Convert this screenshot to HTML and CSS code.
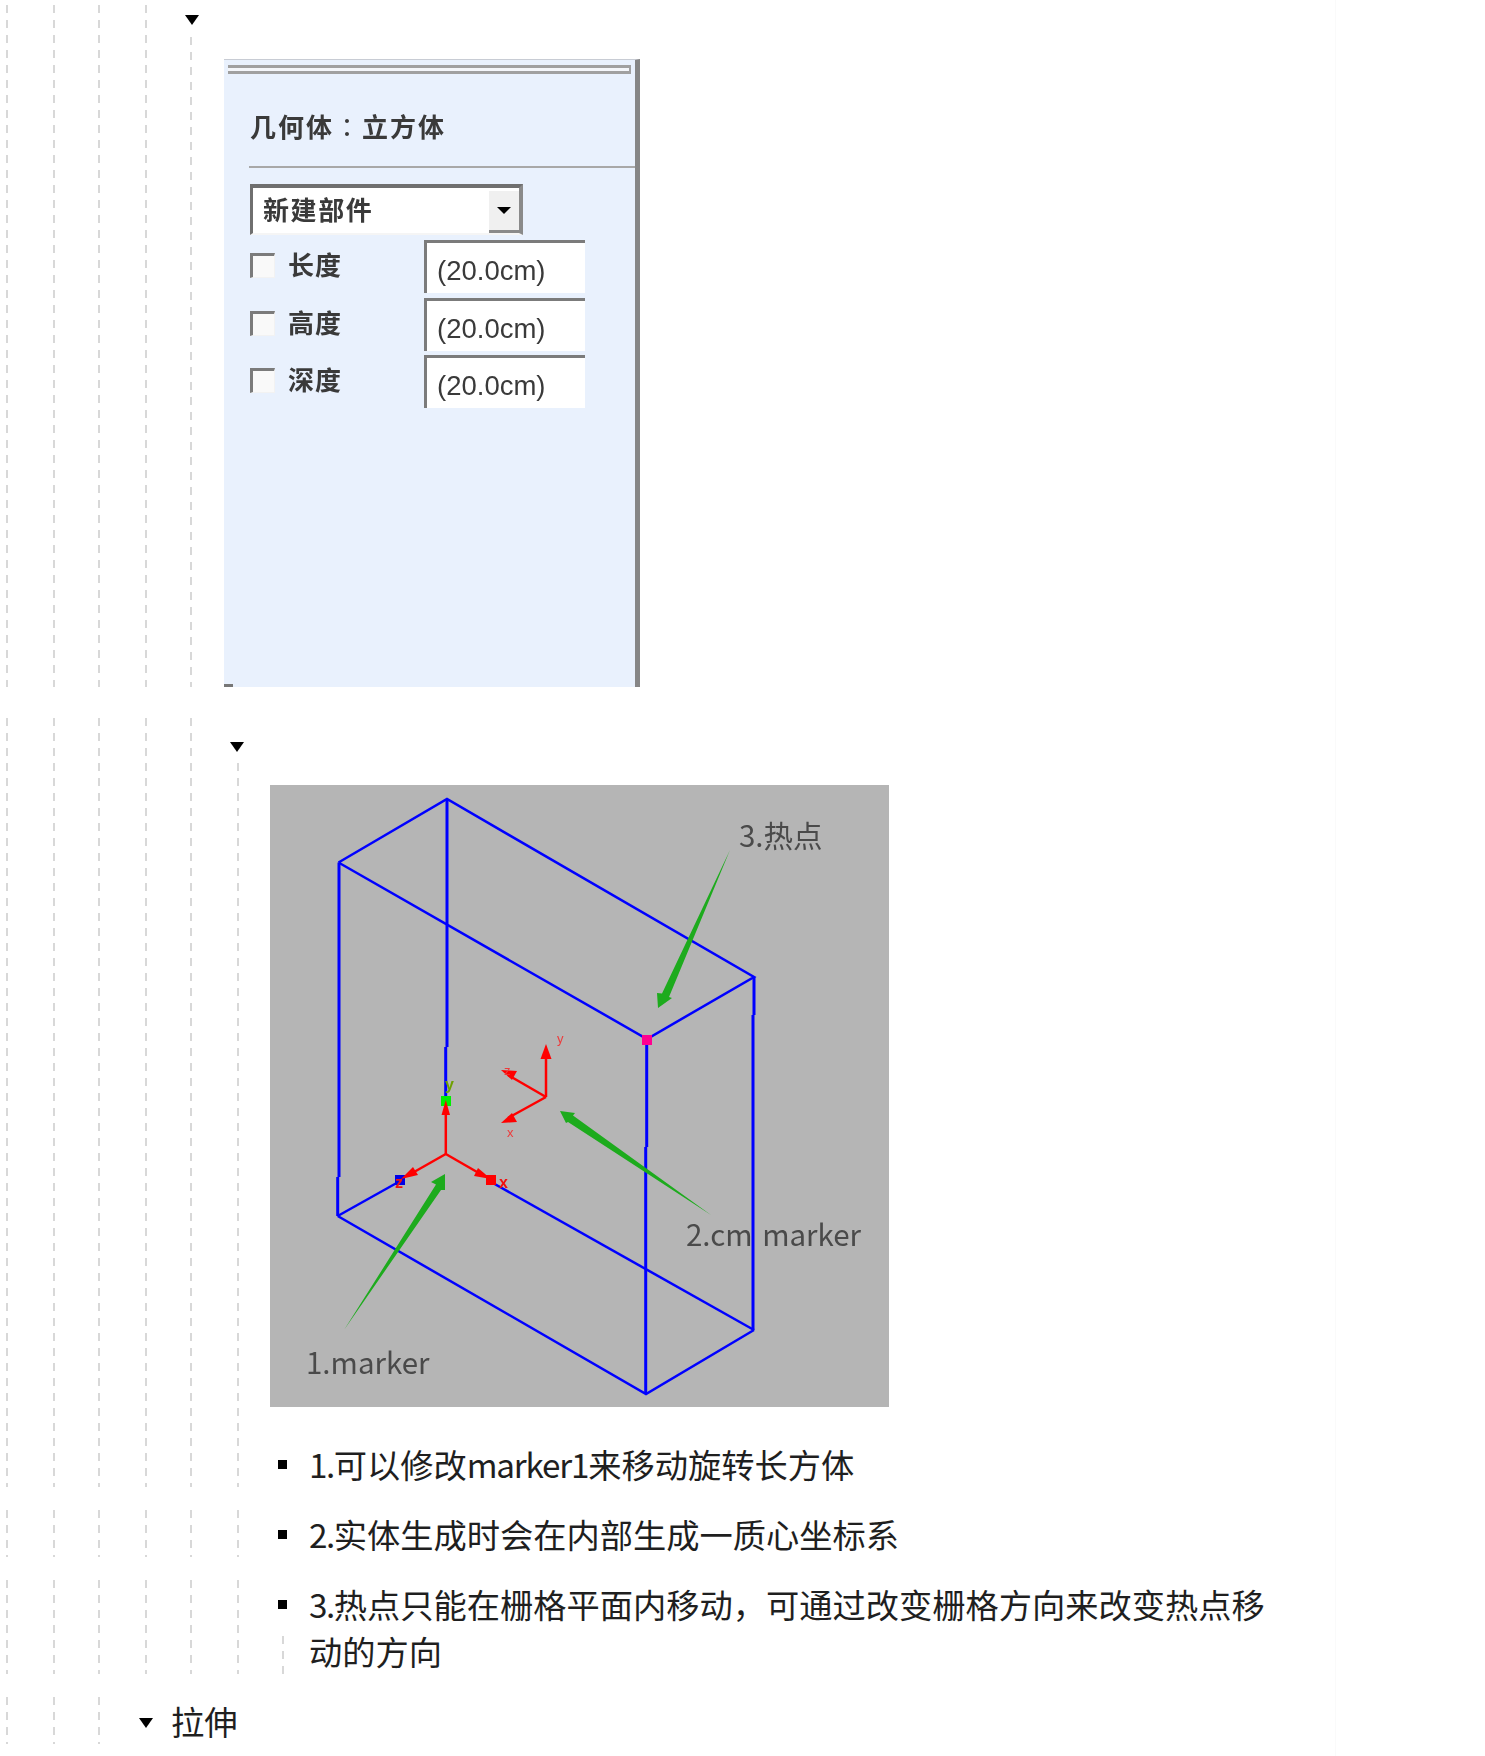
FILE: index.html
```html
<!DOCTYPE html>
<html lang="zh-CN">
<head>
<meta charset="utf-8">
<title>几何体</title>
<link rel="stylesheet" href="styles.css">
</head>
<body>
<div class="row row-panel">
  <i class="g wide"></i><i class="g narrow"></i><i class="g wide"></i><i class="g narrow"></i>
  <div class="stem stem-panel"><span class="caret"></span><div class="line"></div></div>
  <div class="panel">
    <div class="grip"></div>
    <div class="panel-title">几何体<span class="colon" lang="zh-TW">：</span>立方体</div>
    <div class="separator"></div>
    <div class="select"><span class="select-text">新建部件</span><span class="select-btn"><span class="select-arrow"></span></span></div>
    <div class="fields">
      <div class="field"><span class="check"></span><span class="field-label">长度</span><div class="input">(20.0cm)</div></div>
      <div class="field"><span class="check"></span><span class="field-label">高度</span><div class="input">(20.0cm)</div></div>
      <div class="field"><span class="check"></span><span class="field-label">深度</span><div class="input">(20.0cm)</div></div>
    </div>
    <span class="corner"></span>
  </div>
</div>

<div class="row row-figure">
  <i class="g wide"></i><i class="g narrow"></i><i class="g wide"></i><i class="g narrow"></i><i class="g wide"></i>
  <div class="stem stem-figure"><span class="caret"></span><div class="line"></div></div>
  <div class="content">
    <svg class="figure" viewBox="0 0 619 622" width="619" height="622" role="img" aria-label="立方体">
      <rect class="fig-bg" width="619" height="622"/>
      <g class="fig-art">
      <g class="edge">
        <path d="M68.5 77.5 177 14 484 192 377 254 68.5 77.5"/>
        <path d="M67.7 431 376 609 484 545"/>
        <path d="M67.7 431 132 395"/>
        <path d="M222 397.5 484 545"/>
      </g>
      <g class="edge edge-v">
        <path d="M177 14V262"/><path d="M175.7 262V315"/>
        <path d="M69 77.5V392"/><path d="M67.7 392V431"/>
        <path d="M484 192V230"/><path d="M483 230V545"/>
        <path d="M376.7 254V362"/><path d="M375.7 362V609"/>
      </g>
      <rect class="pink" x="372" y="250" width="10" height="10"/>
      <rect class="green" x="171" y="311" width="10" height="10"/>
      <rect class="blue" x="125" y="390" width="10" height="10"/>
      <rect class="red" x="216" y="390" width="10" height="10"/>
      <g class="axis">
        <path d="M175.8 369V325"/><path d="M175.8 369 137 391"/><path d="M175.8 369 214 391"/>
        <path d="M276 312V268"/><path d="M276 312 238 290"/><path d="M276 312 238 333"/>
      </g>
      <g class="red">
        <path d="M175.8 315 180 330H171.5Z"/>
        <path d="M131 394 143 382 148 390Z"/>
        <path d="M221 394 208 383 204 391Z"/>
        <path d="M276 259 281.5 274H270.5Z"/>
        <path d="M231 285 247 286 242 295Z"/>
        <path d="M231 338 242 328 247 337Z"/>
      </g>
      <text class="tag tag-red" x="287" y="258">y</text>
      <text class="tag tag-red" x="234" y="290">z</text>
      <text class="tag tag-red" x="237" y="352">x</text>
      <text class="tag-bold tag-green" x="175" y="305">y</text>
      <text class="tag-bold tag-dark" x="125" y="403">z</text>
      <text class="tag-bold tag-dark" x="229" y="403">x</text>
      <g class="arrow">
        <path d="M388 223 387 208 392 208.5 460 65 399 212 402 213Z"/>
        <path d="M290 326 305 328 303 330.5 441 430 298 337 296 338Z"/>
        <path d="M175 389 161 397 166 399.5 74 545 171 405 175 405Z"/>
      </g>
      <text class="fig-label" x="469" y="62">3.热点</text>
      <text class="fig-label label-spaced" x="416" y="461">2.cm marker</text>
      <text class="fig-label" x="36" y="589">1.marker</text>
      </g>
    </svg>
    <div class="item item-first"><div class="marker"><span class="square"></span></div><div class="item-text"><span class="num">1.</span>可以修改<span class="latin">marker1</span>来移动旋转长方体</div></div>
  </div>
</div>

<div class="row row-item-two">
  <i class="g wide"></i><i class="g narrow"></i><i class="g wide"></i><i class="g narrow"></i><i class="g wide"></i><i class="g last"></i>
  <div class="item"><div class="marker"><span class="square"></span></div><div class="item-text"><span class="num">2.</span>实体生成时会在内部生成一质心坐标系</div></div>
</div>

<div class="row row-item-three">
  <i class="g wide"></i><i class="g narrow"></i><i class="g wide"></i><i class="g narrow"></i><i class="g wide"></i><i class="g last"></i>
  <div class="item"><div class="marker"><span class="square"></span><div class="line marker-line"></div></div><div class="item-lines"><div class="item-text"><span class="num">3.</span>热点只能在栅格平面内移动，可通过改变栅格方向来改变热点移</div><div class="item-text">动的方向</div></div></div>
</div>

<div class="row row-heading">
  <i class="g wide"></i><i class="g narrow"></i><i class="g wide"></i>
  <div class="heading-caret"><span class="caret"></span></div>
  <div class="heading">拉伸</div>
</div>
</body>
</html>
```
FILE: styles.css
```css
html, body {
  margin: 0;
  padding: 0;
}

body {
  width: 1485px;
  height: 1756px;
  overflow: hidden;
  color: #1f1f1f;
  font-family: "Noto Sans CJK SC", "Noto Sans", sans-serif;
  background: linear-gradient(#fafafa, #fafafa) 1335px 0 / 1px 100% no-repeat #fff;
}

.row {
  display: flex;
  align-items: stretch;
  padding-left: 6px;
}

.row-panel { padding-top: 5px; padding-bottom: 7px; }
.row-figure { margin-top: 24px; padding-bottom: 5px; }
.row-item-two { margin-top: 13px; padding-top: 5px; padding-bottom: 6px; }
.row-item-three { margin-top: 15px; padding-top: 2px; padding-bottom: 2px; }
.row-heading { margin-top: 15px; padding-top: 6px; padding-bottom: 9px; }

.g, .line {
  display: block;
  background: repeating-linear-gradient(to bottom, #d8d8d8 0, #d8d8d8 8px, transparent 8px, transparent 15px) 0 0 / 2px 100% no-repeat;
}

.g { flex: none; }
.wide { width: 47px; }
.narrow { width: 45px; }
.last { width: 33px; }

.stem {
  flex: none;
  display: flex;
  flex-direction: column;
  align-items: flex-start;
}

.stem .line { flex: 1; align-self: stretch; }

.stem-panel { width: 34px; padding-top: 10px; }
.stem-panel .caret { margin: 0 0 12px -5px; }
.stem-figure { width: 33px; padding-top: 24px; }
.stem-figure .caret { margin: 0 0 11px -7px; }

.caret {
  display: block;
  width: 0;
  height: 0;
  border-left: 7px solid transparent;
  border-right: 7px solid transparent;
  border-top: 10px solid #000;
}

/* Properties panel */
.panel {
  position: relative;
  box-sizing: border-box;
  width: 416px;
  height: 628px;
  margin-top: 54px;
  background: #e9f1fd;
  border-top: 1px solid #c8ccd4;
  border-right: 5px solid #868686;
  color: #3a3a3a;
  filter: blur(0.65px);
}

.grip {
  box-sizing: border-box;
  height: 9px;
  margin: 5px 4px 0 4px;
  border-top: 3px solid #a0a0a0;
  border-bottom: 3px solid #a0a0a0;
  border-right: 2px solid #a0a0a0;
  background: #f4f6fa;
}

.panel-title {
  margin: 32px 0 0 26px;
  height: 40px;
  font-size: 26px;
  line-height: 40px;
  letter-spacing: 2px;
  font-weight: 700;
}

.colon {
  font-family: "Noto Sans CJK TC", sans-serif;
  font-weight: 400;
}

.separator {
  height: 2px;
  margin: 20px 0 0 25px;
  background: #a8a8a8;
}

.select {
  box-sizing: border-box;
  display: flex;
  align-items: stretch;
  justify-content: space-between;
  width: 273px;
  height: 51px;
  margin: 16px 0 0 26px;
  padding-left: 10px;
  background: #fff;
  border-top: 4px solid #6f6f6f;
  border-left: 3px solid #6f6f6f;
  border-right: 4px solid #8a8a8a;
  border-bottom: 2px solid #f5f5f5;
}

.select-text {
  font-size: 26px;
  line-height: 42px;
  letter-spacing: 1.6px;
  font-weight: 700;
}

.select-btn {
  box-sizing: border-box;
  display: flex;
  align-items: center;
  justify-content: center;
  width: 30px;
  margin-top: 3px;
  background: #f0f0f0;
  border-bottom: 3px solid #8a8a8a;
}

.select-arrow {
  width: 0;
  height: 0;
  border-left: 7px solid transparent;
  border-right: 7px solid transparent;
  border-top: 7px solid #000;
}

.fields {
  display: flex;
  flex-direction: column;
  gap: 5.5px;
  margin: 5px 0 0 26px;
}

.field {
  display: flex;
  align-items: flex-start;
  height: 52px;
}

.check {
  box-sizing: border-box;
  flex: none;
  width: 25px;
  height: 25px;
  margin: 13px 13px 0 0;
  background: #f9f9f9;
  border-top: 3px solid #7b7b7b;
  border-left: 3px solid #7b7b7b;
  border-right: 1px solid #f2f2f2;
  border-bottom: 1px solid #f2f2f2;
}

.field-label {
  flex: none;
  width: 136px;
  font-size: 26px;
  line-height: 47px;
  letter-spacing: 1px;
  font-weight: 700;
}

.input {
  box-sizing: border-box;
  flex: none;
  width: 161px;
  height: 53px;
  padding: 10px 0 0 10px;
  background: #fff;
  border-top: 3px solid #7b7b7b;
  border-left: 3px solid #7b7b7b;
  font-family: "Liberation Sans", Arial, sans-serif;
  font-size: 27.5px;
  line-height: 36px;
}

.corner {
  position: absolute;
  left: 0;
  bottom: 0;
  width: 9px;
  height: 3px;
  background: #777;
}

/* Figure */
.content {
  padding-top: 67px;
}

.figure {
  display: block;
}

.fig-bg { fill: #b5b5b5; }

.fig-art { filter: blur(0.35px); }

.edge path {
  fill: none;
  stroke: #0000ff;
  stroke-width: 2.5;
}

.edge-v path { stroke-width: 3; }

.axis path {
  fill: none;
  stroke: #ff0000;
  stroke-width: 2.5;
}

.pink { fill: #ff0090; }
.green { fill: #00ef00; }
.blue { fill: #0000e6; }
.red { fill: #ff0000; }

.arrow { fill: #1dab1d; }

.fig-label {
  fill: #4a4a4a;
  font-family: "Noto Sans CJK SC", "Open Sans", sans-serif;
  font-size: 29.5px;
}

.label-spaced { word-spacing: 3px; }

.tag {
  font-family: "Liberation Sans", Arial, sans-serif;
  font-size: 13px;
}

.tag-bold {
  font-family: "Liberation Sans", Arial, sans-serif;
  font-size: 16px;
  font-weight: 700;
}

.tag-red { fill: #ee3b3b; }
.tag-green { fill: #6fa000; }
.tag-dark { fill: #f01010; }

/* List items */
.item {
  display: flex;
  align-items: flex-start;
}

.item-first {
  margin-top: 33px;
}

.marker {
  box-sizing: border-box;
  flex: none;
  align-self: stretch;
  display: flex;
  flex-direction: column;
  width: 39px;
  padding: 20px 0 0 8px;
}

.square {
  display: block;
  flex: none;
  width: 9px;
  height: 9px;
  background: #000;
}

.marker-line {
  flex: 1;
  margin: 27px 0 0 4px;
}

.item-text {
  font-size: 33.25px;
  line-height: 47px;
  white-space: nowrap;
}

.num { letter-spacing: -1.5px; }
.latin { letter-spacing: -1.2px; }

.heading-caret {
  flex: none;
  width: 26px;
  padding-top: 21px;
}

.heading-caret .caret {
  margin-left: -6px;
}

.heading {
  font-size: 33.25px;
  line-height: 47px;
}
```
